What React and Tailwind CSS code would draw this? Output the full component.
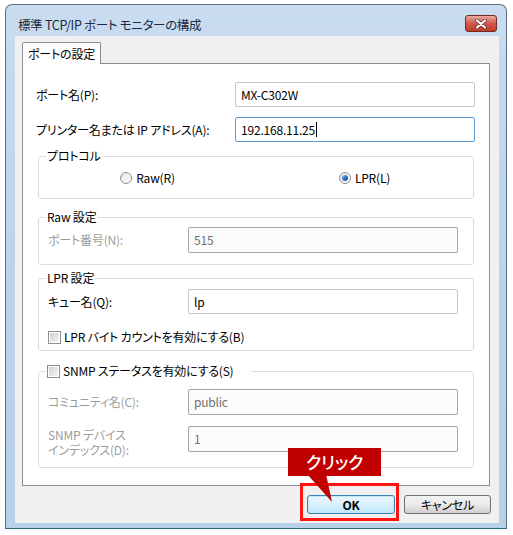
import React from 'react';

// Windows 7 style "標準 TCP/IP ポート モニターの構成" dialog

function TextBox({ value, disabled, focused, className = '' }) {
  let look = 'border-[#c2c6cd] bg-white text-black';
  if (disabled) look = 'border-[#a5a5a5] bg-[#fcfcfc] text-[#707070]';
  if (focused) look = 'border-[#5b9bd5] bg-white text-black';
  return (
    <div className={`flex items-center rounded-[2px] border pl-[5px] ${look} ${className}`}>
      <span>{value}</span>
      {focused && <span className="ml-px h-[15px] w-px bg-black" />}
    </div>
  );
}

function Radio({ checked, label }) {
  return (
    <div className="flex items-center gap-[4px]">
      <span className="flex h-[12px] w-[12px] items-center justify-center rounded-full border border-[#8e8f8f] bg-gradient-to-br from-[#e6e6e6] to-[#fbfbfb]">
        {checked && (
          <span className="h-[6px] w-[6px] rounded-full bg-gradient-to-br from-[#8cc6ef] via-[#2a78c7] to-[#0d4f9a]" />
        )}
      </span>
      <span>{label}</span>
    </div>
  );
}

function CheckBox({ label }) {
  return (
    <div className="flex items-center gap-[3px]">
      <span className="flex h-[13px] w-[13px] items-center justify-center border border-[#8e8f8f] bg-white">
        <span className="h-[9px] w-[9px] bg-gradient-to-br from-[#cbcfd5] to-[#f5f6f7]" />
      </span>
      <span>{label}</span>
    </div>
  );
}

function Group({ legend, className = '', legendClass = '', children }) {
  return (
    <fieldset className={`mx-[2px] mr-[1px] rounded-[3px] border border-[#d5dfe5] ${className}`}>
      <legend className={`-ml-[2px] px-[1px] ${legendClass}`}>{legend}</legend>
      {children}
    </fieldset>
  );
}

export default function App() {
  return (
    <div className="relative h-[535px] w-[513px] bg-white pl-[5px] pt-[4px] font-['Noto_Sans_CJK_JP','Noto_Sans',sans-serif] text-[12px] leading-[16px] tracking-[-0.2px] text-black [font-feature-settings:'palt']">
      {/* window frame */}
      <div className="flex h-[525px] w-[502px] flex-col rounded-t-[7px] border border-[#5a6e82] border-b-[#2c6f7b] bg-gradient-to-b from-[#c9dcf0] via-[#bcd3ea] to-[#b8d0e9] pb-[5px] pl-[9px] pr-[7px]">
        {/* title bar */}
        <div className="flex h-[31px] items-start justify-between">
          <span className="ml-[3px] mt-[12px] text-[12.5px] tracking-[-0.3px] text-[#1b2a3c]">標準 TCP/IP ポート モニターの構成</span>
          <div className="mr-[2px] mt-[10px] flex h-[17px] w-[32px] items-center justify-center rounded-[3px] border border-[#6d2b24] bg-gradient-to-b from-[#e8a99d] via-[#d0594b] to-[#c23a2b]">
            <svg width="12" height="10" viewBox="0 0 12 10">
              <path d="M2 1.5 L10 8.5 M10 1.5 L2 8.5" stroke="#5a2a25" strokeWidth="3.6" strokeLinecap="round" />
              <path d="M2 1.5 L10 8.5 M10 1.5 L2 8.5" stroke="#ffffff" strokeWidth="2.2" strokeLinecap="round" />
            </svg>
          </div>
        </div>

        {/* client area */}
        <div className="flex flex-1 flex-col bg-[#f0f0f0] pl-[7px] pr-[9px] pt-[6px]">
          <div className="relative z-10 -mb-px flex h-[22px] w-[79px] items-center justify-center rounded-t-[2px] border border-b-0 border-[#898c95] bg-white">
            ポートの設定
          </div>

          <div className="h-[423px] border border-[#898c95] bg-white pl-[13px] pr-[14px] pt-[18px]">
            <div className="flex h-[25px] items-center justify-between">
              <span>ポート名(P):</span>
              <TextBox value="MX-C302W" className="h-[25px] w-[240px]" />
            </div>
            <div className="mt-[10px] flex h-[25px] items-center justify-between">
              <span>プリンター名または IP アドレス(A):</span>
              <TextBox value="192.168.11.25" focused className="h-[25px] w-[240px]" />
            </div>

            <Group legend="プロトコル" className="mt-[6px] pb-[12px]" legendClass="ml-[7px]">
              <div className="mt-[6px] grid h-[16px] grid-cols-2">
                <div className="flex justify-center">
                  <Radio label="Raw(R)" />
                </div>
                <div className="flex justify-center">
                  <Radio checked label="LPR(L)" />
                </div>
              </div>
            </Group>

            <Group legend="Raw 設定" className="mt-[10px] pb-[11px] pl-[9px] pr-[15px]">
              <div className="mt-[2px] flex h-[26px] items-center justify-between">
                <span className="text-[#9c9c9c]">ポート番号(N):</span>
                <TextBox value="515" disabled className="h-[26px] w-[270px]" />
              </div>
            </Group>

            <Group legend="LPR 設定" className="mt-[5px] pb-[5px] pl-[9px] pr-[15px]">
              <div className="mt-[3px] flex h-[25px] items-center justify-between">
                <span>キュー名(Q):</span>
                <TextBox value="lp" className="h-[25px] w-[270px]" />
              </div>
              <div className="mt-[15px] flex h-[16px] items-center">
                <CheckBox label="LPR バイト カウントを有効にする(B)" />
              </div>
            </Group>

            <Group
              legend={<CheckBox label="SNMP ステータスを有効にする(S)" />}
              className="mt-[12px] pb-[15px] pl-[9px] pr-[15px]"
              legendClass="pr-[18px]"
            >
              <div className="mt-[10px] flex h-[26px] items-center justify-between">
                <span className="text-[#9c9c9c]">コミュニティ名(C):</span>
                <TextBox value="public" disabled className="h-[26px] w-[270px]" />
              </div>
              <div className="mt-[11px] flex h-[26px] items-center justify-between">
                <span className="mt-[5px] flex flex-col text-[#9c9c9c]">
                  <span className="leading-[15px]">SNMP デバイス</span>
                  <span className="leading-[15px]">インデックス(D):</span>
                </span>
                <TextBox value="1" disabled className="h-[26px] w-[270px]" />
              </div>
            </Group>
          </div>

          {/* dialog buttons */}
          <div className="-mr-px mt-[9px] flex justify-end gap-[9px]">
            <button className="flex h-[19px] w-[88px] items-center justify-center rounded-[3px] border border-[#3c7fb1] bg-gradient-to-b from-[#eaf6fd] via-[#d9f0fc] to-[#bee6fd] font-semibold shadow-[inset_0_0_0_1px_#bfe8fb]">
              OK
            </button>
            <button className="flex h-[19px] w-[87px] items-center justify-center rounded-[3px] border border-[#707070] bg-gradient-to-b from-[#f2f2f2] via-[#ebebeb] to-[#cfcfcf]">
              キャンセル
            </button>
          </div>
        </div>
      </div>

      {/* click annotation */}
      <div className="absolute left-[300px] top-[483px] h-[38px] w-[99px] border-[3px] border-[#ff1414]" />
      <svg className="absolute left-[300px] top-[474px]" width="40" height="30" viewBox="0 0 40 30">
        <polygon points="7,0 26,0 32,28" fill="#c00000" />
      </svg>
      <div className="absolute left-[288px] top-[448px] flex h-[28px] w-[93px] items-center justify-center bg-[#c00000] text-[17px] font-medium text-white">
        クリック
      </div>
    </div>
  );
}
